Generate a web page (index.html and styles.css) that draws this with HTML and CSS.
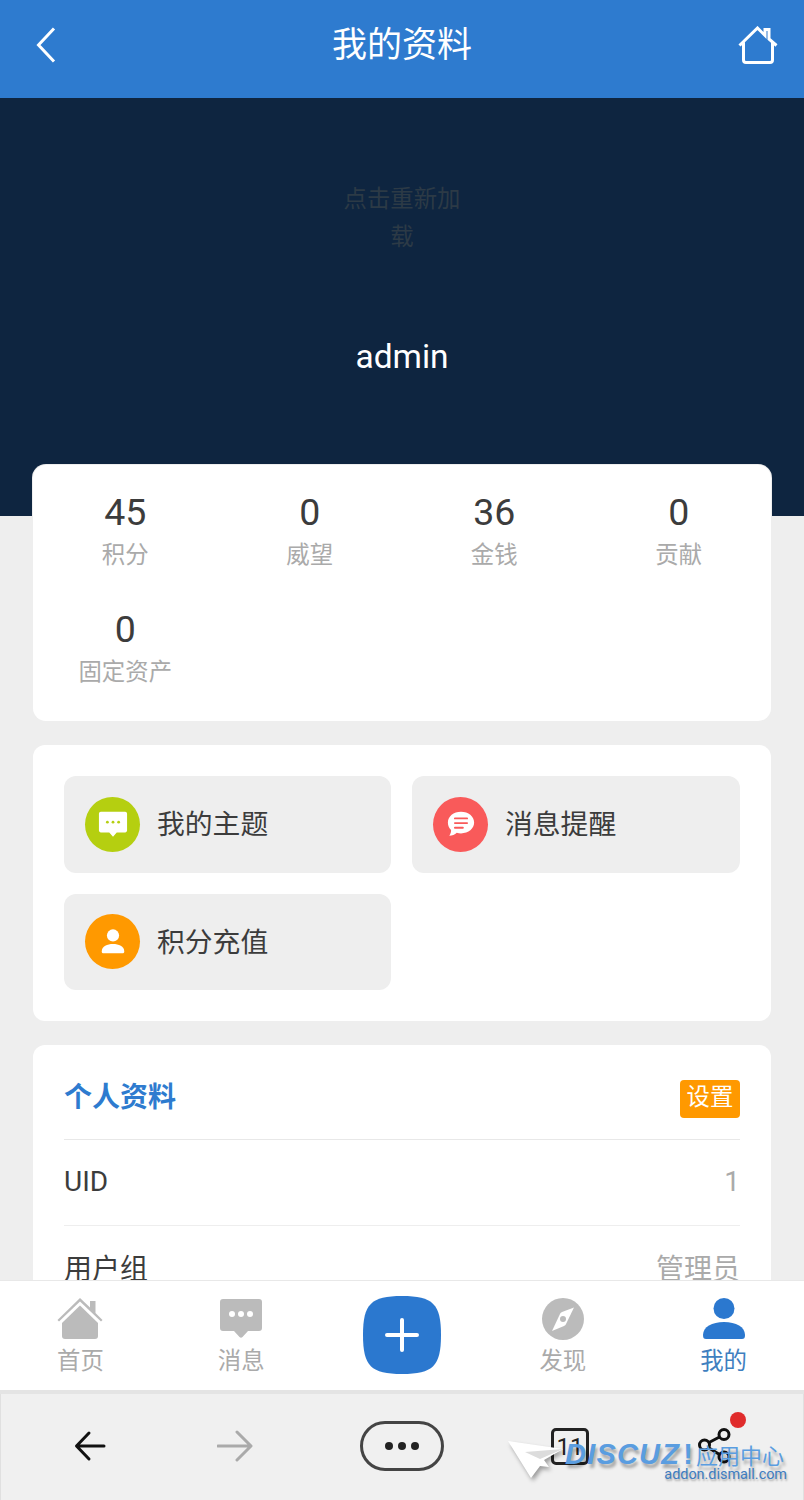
FILE: index.html
```html
<!DOCTYPE html>
<html lang="zh-CN">

<head>
  <meta charset="UTF-8">
  <meta name="viewport" content="width=device-width, initial-scale=1.0">
  <title>我的资料</title>
  <link rel="stylesheet" href="styles.css">
</head>

<body>
  <div class="app">
    <header class="top-bar">
      <svg class="top-back" viewBox="0 0 20 36"><path d="M18 1.500 2.500 18 18 34.500"/></svg>
      <h1 class="top-title">我的资料</h1>
      <svg class="top-home" viewBox="0 0 40 38"><path d="M1.500 19.500 19.500 2 27 9.500V3.500H31V13L38.500 19.500M5.500 16.500V34C5.500 35.500 6.500 36.500 8 36.500H32C33.500 36.500 34.500 35.500 34.500 34V16.500"/></svg>
    </header>

    <main class="content">
      <section class="hero">
        <div class="hero-reload">点击重新加载</div>
        <div class="hero-name">admin</div>
      </section>

      <section class="card stats">
        <div class="stat"><span class="stat-value">45</span><span class="stat-label">积分</span></div>
        <div class="stat"><span class="stat-value">0</span><span class="stat-label">威望</span></div>
        <div class="stat"><span class="stat-value">36</span><span class="stat-label">金钱</span></div>
        <div class="stat"><span class="stat-value">0</span><span class="stat-label">贡献</span></div>
        <div class="stat"><span class="stat-value">0</span><span class="stat-label">固定资产</span></div>
      </section>

      <section class="card menu">
        <a class="menu-item">
          <span class="menu-icon icon-green">
            <svg viewBox="0 0 32 32"><path d="M3 3H29C30 3 31 4 31 5V23C31 24 30 25 29 25H20L16 29.500 12 25H3C2 25 1 24 1 23V5C1 4 2 3 3 3Z" fill="#fff"/><circle cx="10" cy="14" r="1.500" fill="#b5cf10"/><circle cx="16" cy="14" r="1.500" fill="#b5cf10"/><circle cx="22" cy="14" r="1.500" fill="#b5cf10"/></svg>
          </span>
          <span class="menu-text">我的主题</span>
        </a>
        <a class="menu-item">
          <span class="menu-icon icon-red">
            <svg viewBox="0 0 32 32"><path d="M16 3C24 3 30 8 30 14.500S24 26 16 26C14.500 26 13 25.800 11.500 25.400 9.500 27.500 6.500 28.500 3.500 28.500 5 26.500 5.500 24.500 5.400 22.500 3.300 20.500 2 17.700 2 14.500 2 8 8 3 16 3Z" fill="#fff"/><path d="M9.500 10H22.500M9.500 15H22.500M9.500 20H18" stroke="#f95a5a" stroke-width="2" stroke-linecap="round"/></svg>
          </span>
          <span class="menu-text">消息提醒</span>
        </a>
        <a class="menu-item">
          <span class="menu-icon icon-orange">
            <svg viewBox="0 0 32 32"><circle cx="16" cy="9" r="6.500" fill="#fff"/><path d="M4 26C4 20 10 18 16 18S28 20 28 26C28 27.500 27 28 26 28H6C5 28 4 27.500 4 26Z" fill="#fff"/></svg>
          </span>
          <span class="menu-text">积分充值</span>
        </a>
      </section>

      <section class="card profile">
        <div class="profile-head">
          <h2 class="profile-title">个人资料</h2>
          <a class="profile-tag">设置</a>
        </div>
        <div class="profile-row"><span>UID</span><span class="profile-value">1</span></div>
        <div class="profile-row"><span>用户组</span><span class="profile-value">管理员</span></div>
      </section>
    </main>

    <nav class="tab-bar">
      <a class="tab-item">
        <svg class="tab-icon" viewBox="0 0 46 44"><path d="M0.500 23 23 1 33 10.500V4H38.500V16L45.500 23 44 24.500 23 4.500 2 24.500Z" fill="#bbb"/><path d="M5 26 23 8.500 41 26V39C41 41 40 42 38 42H8C6 42 5 41 5 39Z" fill="#bbb"/></svg>
        <span>首页</span>
      </a>
      <a class="tab-item">
        <svg class="tab-icon" viewBox="0 0 44 44"><path d="M4 2H40C42 2 43 3 43 5V31C43 33 42 34 40 34H29L23.500 40C22.500 41 21.500 41 20.500 40L15 34H4C2 34 1 33 1 31V5C1 3 2 2 4 2Z" fill="#bbb"/><circle cx="13" cy="17" r="3" fill="#fff"/><circle cx="22" cy="17" r="3" fill="#fff"/><circle cx="31" cy="17" r="3" fill="#fff"/></svg>
        <span>消息</span>
      </a>
      <a class="tab-item tab-add">
        <svg class="add-button" viewBox="0 0 78 78"><path d="M39 0C70 0 78 8 78 39S70 78 39 78 0 70 0 39 8 0 39 0Z" fill="#2b78cf"/><path d="M39 24V54M24 39H54" stroke="#fff" stroke-width="4" stroke-linecap="round"/></svg>
      </a>
      <a class="tab-item">
        <svg class="tab-icon" viewBox="0 0 44 44"><circle cx="22" cy="22" r="21" fill="#bbb"/><path d="M33 10.500 25 27C24.500 28 24 28.500 23 29L11 34 19 17C19.500 16 20 15.500 21 15Z" fill="#fff"/><circle cx="22" cy="22" r="3" fill="#bbb"/></svg>
        <span>发现</span>
      </a>
      <a class="tab-item tab-active">
        <svg class="tab-icon" viewBox="0 0 44 44"><circle cx="22" cy="11.500" r="10.500" fill="#2b78cf"/><path d="M1 38C1 30 10 25 22 25S43 30 43 38C43 41 42 42 40 42H4C2 42 1 41 1 38Z" fill="#2b78cf"/></svg>
        <span>我的</span>
      </a>
    </nav>

    <footer class="browser-bar">
      <svg class="browser-arrow" viewBox="0 0 32 32"><path d="M30 16H3M15 3 2.500 16 15 29" stroke="#111"/></svg>
      <svg class="browser-arrow arrow-next" viewBox="0 0 36 32"><path d="M1 16H33M20 2 34 16 20 30" stroke="#aaa"/></svg>
      <span class="browser-more"><i></i><i></i><i></i></span>
      <span class="browser-tabs">11</span>
      <span class="browser-share">
        <svg viewBox="0 0 36 36"><circle cx="26" cy="6.500" r="5" /><circle cx="6.500" cy="17" r="5"/><circle cx="26" cy="29" r="5"/><path d="M21.500 9 11 14.500M11 20 21.500 26.500"/></svg>
        <span class="share-dot"></span>
      </span>

      <div class="watermark">
        <svg class="watermark-cursor" viewBox="0 0 56 40"><path d="M1 1 56 9 37 20 42 27 33 26 24 38Z" fill="#fff"/><path d="M18 12 56 9 33 19Z" fill="#dcdcdc"/></svg>
        <div class="watermark-line"><b>DISCUZ</b><b class="watermark-mark">!</b><span>应用中心</span></div>
        <div class="watermark-url">addon.dismall.com</div>
      </div>
    </footer>
  </div>
</body>

</html>
```

FILE: styles.css
```css
* {
  box-sizing: border-box;
}

body {
  margin: 0;
  font-family: Roboto, "Noto Sans CJK SC", sans-serif;
  color: #3c3c3c;
  background: #eee;
}

h1,
h2 {
  margin: 0;
  font-weight: normal;
}

.app {
  display: flex;
  flex-direction: column;
  height: 1500px;
  overflow: hidden;
}

.top-bar {
  display: grid;
  flex: none;
  grid-template-columns: 1fr auto 1fr;
  align-items: center;
  height: 98px;
  padding: 0 26px 8px;
  background: #2e7bcf;
  color: #fff;
}

.top-back {
  width: 20px;
  height: 36px;
  margin-left: 10px;
  fill: none;
  stroke: #fff;
  stroke-width: 3;
}

.top-home {
  justify-self: end;
  width: 40px;
  height: 38px;
  fill: none;
  stroke: #fff;
  stroke-width: 3;
}

.top-title {
  margin-top: 2px;
  font-size: 35px;
  line-height: 40px;
}

.content {
  flex: 1;
  min-height: 0;
  overflow: hidden;
}

.hero {
  display: flex;
  flex-direction: column;
  align-items: center;
  height: 418px;
  padding-top: 82px;
  background: #0e2540;
}

.hero-reload {
  width: 120px;
  font-size: 23.400px;
  line-height: 38px;
  text-align: center;
  color: #2c3a46;
}

.hero-name {
  margin-top: 82px;
  font-size: 33.500px;
  line-height: 38px;
  color: #fff;
}

.card {
  margin: 24px 33px 0;
  border-radius: 12px;
  background: #fff;
}

.stats {
  display: grid;
  grid-template-columns: repeat(4, 1fr);
  height: 256px;
  margin-top: -51px;
  padding-top: 23px;
  border-radius: 13px;
  box-shadow: 0 0 0 1px #eee;
  grid-auto-rows: 117px;
}

.stat {
  display: flex;
  flex-direction: column;
  align-items: center;
}

.stat-value {
  font-size: 37.500px;
  line-height: 48px;
}

.stat-label {
  margin-top: 4px;
  font-size: 23.400px;
  line-height: 30px;
  color: #aaa;
}

.menu {
  display: grid;
  grid-template-columns: 327px 328px;
  gap: 21px;
  height: 276px;
  padding: 31px;
}

.menu-item {
  display: flex;
  align-items: center;
  height: 96.500px;
  padding-left: 21px;
  border-radius: 12px;
  background: #eee;
}

.menu-icon {
  display: flex;
  align-items: center;
  justify-content: center;
  width: 55px;
  height: 55px;
  border-radius: 50%;
}

.menu-icon svg {
  width: 30px;
  height: 30px;
}

.icon-green {
  background: #b5cf10;
}

.icon-red {
  background: #f95a5a;
}

.icon-orange {
  background: #ff9900;
}

.menu-text {
  margin: 0 0 4px 17px;
  font-size: 27.800px;
}

.profile {
  padding: 0 31px;
}

.profile-head {
  display: flex;
  align-items: center;
  justify-content: space-between;
  height: 95px;
  padding-top: 9px;
  border-bottom: 1px solid #e8e8e8;
}

.profile-title {
  margin-bottom: 4px;
  font-size: 28px;
  font-weight: bold;
  color: #2e7bcf;
}

.profile-tag {
  width: 60px;
  height: 38px;
  margin-top: 4px;
  border-radius: 4px;
  background: #ff9900;
  font-size: 23.400px;
  line-height: 34px;
  text-align: center;
  color: #fff;
}

.profile-row {
  display: flex;
  align-items: center;
  justify-content: space-between;
  height: 86px;
  padding-bottom: 3px;
  border-bottom: 1px solid #eee;
  font-size: 28px;
}

.profile-value {
  color: #aaa;
}

.tab-bar {
  display: grid;
  flex: none;
  grid-template-columns: repeat(5, 1fr);
  height: 114px;
  border-top: 1px solid #e8e8e8;
  border-bottom: 4px solid #e4e4e4;
  background: #fff;
}

.tab-item {
  display: flex;
  flex-direction: column;
  align-items: center;
  padding-top: 16px;
  font-size: 23.400px;
  line-height: 30px;
  color: #aaa;
}

.tab-icon {
  width: 46px;
  height: 44px;
  margin-bottom: 5px;
}

.tab-active {
  color: #3f7fbf;
}

.tab-add {
  padding-top: 15px;
}

.add-button {
  width: 78px;
  height: 78px;
}

.browser-bar {
  position: relative;
  display: flex;
  flex: none;
  align-items: center;
  height: 106px;
  padding-bottom: 2px;
  border-left: 1px solid #e0e0e0;
  border-right: 1px solid #e0e0e0;
  background: #f0f0f0;
}

.browser-arrow {
  width: 32px;
  height: 32px;
  margin-left: 73px;
  fill: none;
  stroke-width: 3;
  stroke-linecap: round;
  stroke-linejoin: round;
}

.arrow-next {
  width: 36px;
  margin-left: 111px;
}

.browser-more {
  display: flex;
  align-items: center;
  justify-content: center;
  gap: 5px;
  width: 84px;
  height: 50px;
  margin-left: 107px;
  border: 3px solid #444;
  border-radius: 25px;
}

.browser-more i {
  width: 8px;
  height: 8px;
  border-radius: 50%;
  background: #222;
}

.browser-tabs {
  width: 38px;
  height: 37px;
  margin-left: 107px;
  border: 3px solid #222;
  border-radius: 5px;
  font-size: 24px;
  line-height: 33px;
  text-align: center;
  color: #222;
}

.browser-share {
  position: relative;
  display: block;
  width: 36px;
  height: 36px;
  margin-left: 109px;
}

.browser-share svg {
  width: 36px;
  height: 36px;
  fill: none;
  stroke: #111;
  stroke-width: 3;
}

.share-dot {
  position: absolute;
  top: -16px;
  left: 32px;
  width: 16px;
  height: 16px;
  border-radius: 50%;
  background: #e02c2c;
}

.watermark {
  position: absolute;
  top: 46px;
  left: 506px;
  width: 282px;
  height: 60px;
}

.watermark-cursor {
  position: absolute;
  top: 0;
  left: 0;
  width: 56px;
  height: 40px;
  filter: drop-shadow(2px 3px 2px rgba(0, 0, 0, 0.35));
}

.watermark-line {
  position: absolute;
  top: -3px;
  left: 58px;
  display: flex;
  align-items: center;
  height: 34px;
  white-space: nowrap;
  color: #5a9de0;
  text-shadow: 2px 4px 3px rgba(0, 0, 0, 0.3);
}

.watermark-line b {
  font-family: "Liberation Sans", sans-serif;
  font-size: 29px;
  font-style: italic;
  letter-spacing: 1.200px;
}

.watermark-line .watermark-mark {
  margin-left: 3px;
  font-style: normal;
}

.watermark-line span {
  margin-left: 2px;
  font-size: 22px;
}

.watermark-url {
  position: absolute;
  top: 25px;
  right: 2px;
  font-size: 14.400px;
  line-height: 20px;
  white-space: nowrap;
  color: #3d7cc0;
  text-shadow: 1px 2px 2px rgba(0, 0, 0, 0.3);
}
```
